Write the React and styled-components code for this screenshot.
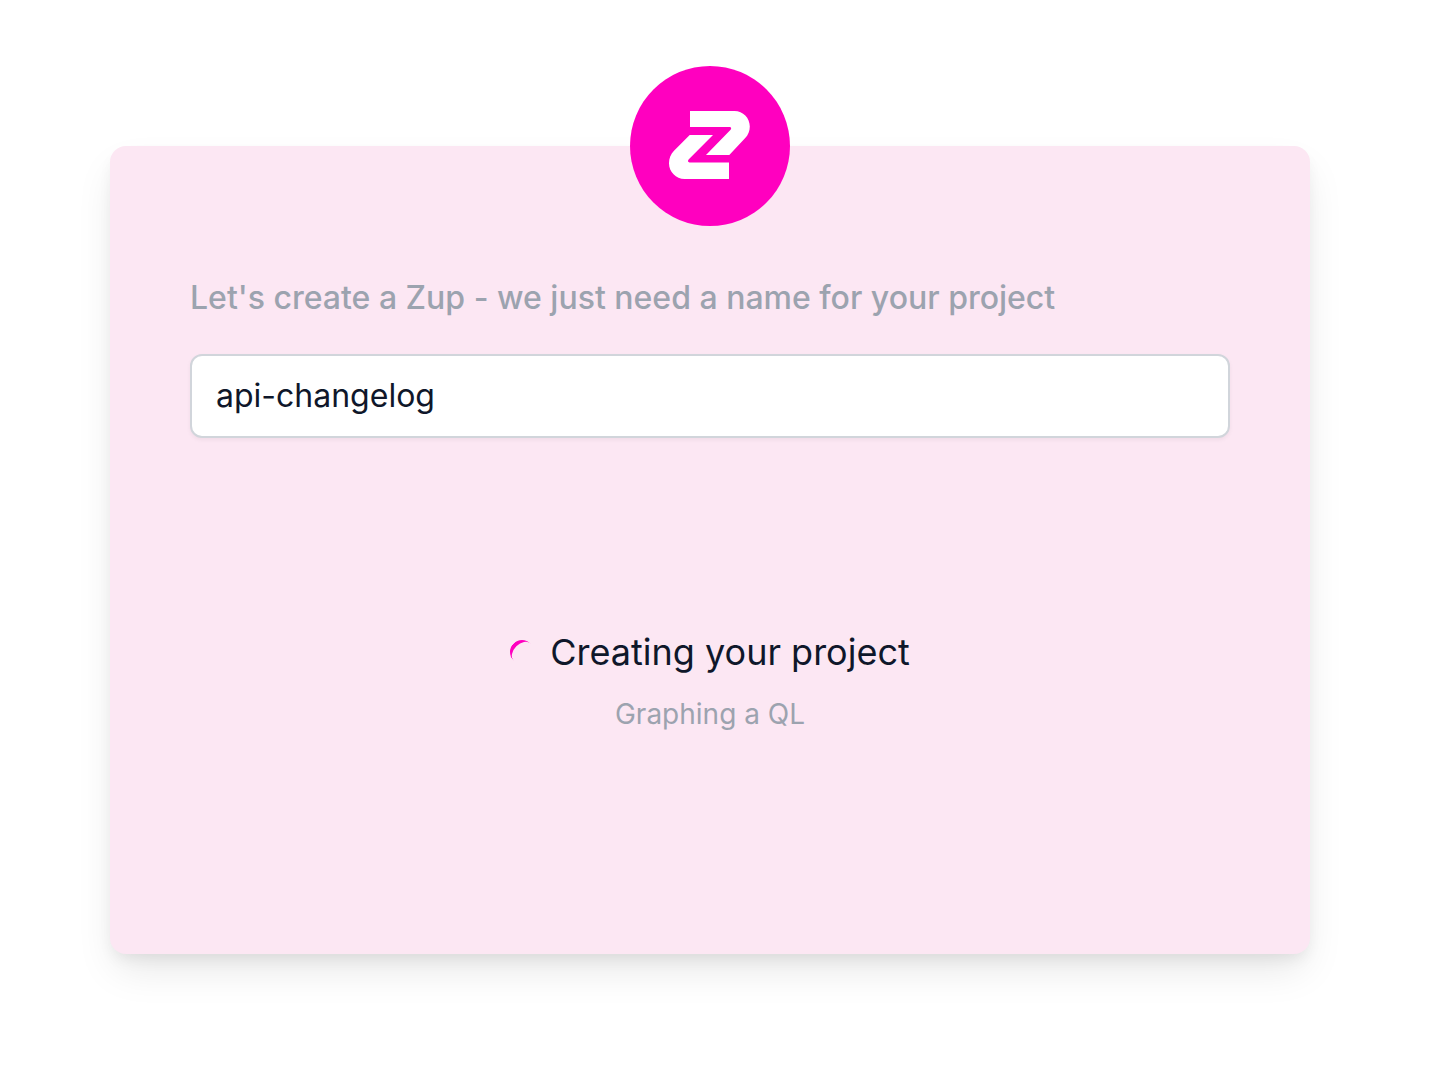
import React, { useState } from "react";
import styled, { createGlobalStyle } from "styled-components";

const GlobalStyle = createGlobalStyle`
  *, *::before, *::after { box-sizing: border-box; }
  body {
    margin: 0;
    background: #ffffff;
    color: #0f172a;
    font-family: Inter, "Liberation Sans", sans-serif;
  }
`;

const Page = styled.main`
  padding: 66px 146px 66px 110px;
`;

const Card = styled.section`
  display: flex;
  flex-direction: column;
  max-width: 1200px;
  margin: 80px auto 0;
  padding: 0 80px 220px;
  border-radius: 16px;
  background: #fce7f3;
  box-shadow: 0 20px 40px -6px rgba(0, 0, 0, 0.1), 0 8px 16px -4px rgba(0, 0, 0, 0.08);
`;

const Badge = styled.div`
  display: flex;
  align-self: center;
  width: 160px;
  height: 160px;
  margin-top: -80px;
  border-radius: 50%;
  background: #ff00bf;
`;

const Form = styled.form`
  display: flex;
  flex-direction: column;
  gap: 32px;
  margin-top: 48px;
`;

const Label = styled.label`
  color: #9ca3af;
  font-size: 32px;
  font-weight: 500;
  line-height: 48px;
`;

const NameInput = styled.input`
  width: 100%;
  height: 84px;
  padding: 0 24px 2px;
  border: 2px solid #d1d5db;
  border-radius: 12px;
  outline: none;
  background: #ffffff;
  box-shadow: 0 2px 4px rgba(0, 0, 0, 0.05);
  color: #0f172a;
  font: 400 32px/48px Inter, "Liberation Sans", sans-serif;
`;

const Status = styled.div`
  display: flex;
  flex-direction: column;
  align-items: center;
  gap: 14px;
  margin-top: 186px;
`;

const StatusTitle = styled.div`
  display: flex;
  align-items: center;
  gap: 16px;
  font-size: 36px;
  line-height: 56px;
`;

const Spinner = styled.span`
  width: 24px;
  height: 24px;
  border-top: 4px solid #ff00bf;
  border-radius: 50%;
  transform: rotate(-45deg);
`;

const StatusDetail = styled.p`
  margin: 0;
  color: #9ca3af;
  font-size: 28px;
  line-height: 40px;
`;

function Logo() {
  return (
    <svg width="160" height="160" viewBox="0 0 160 160" fill="#fff" role="img" aria-label="Zup">
      <path d="M60 45H104.500C113 45 119.800 52 119.800 60.500C119.800 65 118.300 69 115 72.300L99.300 89H76L100.600 63.800C101.700 62.600 101.200 61 99.800 61H60Z" />
      <path d="M59.700 69H83L58.600 93.600C57.500 94.800 58 96.500 59.500 96.500H99V113H54.500C46 113 39 106 39 97.300C39 92.500 40.600 88.300 44 84.800Z" />
    </svg>
  );
}

export default function App() {
  const [name, setName] = useState("api-changelog");
  return (
    <>
      <GlobalStyle />
      <Page>
        <Card>
          <Badge>
            <Logo />
          </Badge>
          <Form onSubmit={(event) => event.preventDefault()}>
            <Label htmlFor="project-name">Let's create a Zup - we just need a name for your project</Label>
            <NameInput
              id="project-name"
              type="text"
              value={name}
              onChange={(event) => setName(event.target.value)}
            />
          </Form>
          <Status role="status">
            <StatusTitle>
              <Spinner aria-hidden="true" />
              Creating your project
            </StatusTitle>
            <StatusDetail>Graphing a QL</StatusDetail>
          </Status>
        </Card>
      </Page>
    </>
  );
}
